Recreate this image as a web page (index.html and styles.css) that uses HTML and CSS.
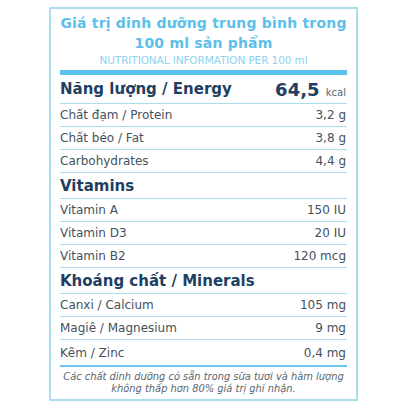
FILE: index.html
```html
<!DOCTYPE html>
<html lang="vi">
<head>
<meta charset="utf-8">
<link rel="stylesheet" href="styles.css">
</head>
<body>
<div class="card">
  <div class="title">Giá trị dinh dưỡng trung bình trong<br>100 ml sản phẩm</div>
  <div class="subtitle">NUTRITIONAL INFORMATION PER 100 ml</div>
  <div class="bar"></div>
  <div class="row energy"><span class="head">Năng lượng / Energy</span><span class="big">64,5 <small>kcal</small></span></div>
  <div class="row"><span>Chất đạm / Protein</span><span>3,2 g</span></div>
  <div class="row"><span>Chất béo / Fat</span><span>3,8 g</span></div>
  <div class="row"><span>Carbohydrates</span><span>4,4 g</span></div>
  <div class="row section"><span class="head">Vitamins</span></div>
  <div class="row"><span>Vitamin A</span><span>150 IU</span></div>
  <div class="row"><span>Vitamin D3</span><span>20 IU</span></div>
  <div class="row"><span>Vitamin B2</span><span>120 mcg</span></div>
  <div class="row section"><span class="head">Khoáng chất / Minerals</span></div>
  <div class="row"><span>Canxi / Calcium</span><span>105 mg</span></div>
  <div class="row"><span>Magiê / Magnesium</span><span>9 mg</span></div>
  <div class="row last"><span>Kẽm / Zinc</span><span>0,4 mg</span></div>
  <div class="note">Các chất dinh dưỡng có sẵn trong sữa tươi và hàm lượng<br>không thấp hơn 80% giá trị ghi nhận.</div>
</div>
</body>
</html>
```
FILE: styles.css
```css
html, body {
  margin: 0;
  padding: 0;
  background: #ffffff;
}
body {
  font-family: "DejaVu Sans", "Noto Sans", sans-serif;
  color: #46515b;
}
.card {
  width: 287px;
  margin: 7px auto 0;
  padding: 4px 9px 0;
  border: 2px solid #a9dcef;
  height: 386px;
  box-sizing: content-box;
}
.title {
  text-align: center;
  color: #5cbfea;
  font-weight: bold;
  font-size: 14px;
  letter-spacing: 0.2px;
  line-height: 20px;
  white-space: nowrap;
}
.subtitle {
  text-align: center;
  color: #8ed2ef;
  font-size: 10.5px;
  line-height: 14px;
  letter-spacing: -0.1px;
  white-space: nowrap;
}
.bar {
  height: 5px;
  background: #5cc4ea;
  margin-top: 3px;
}
.row {
  display: flex;
  justify-content: space-between;
  align-items: center;
  height: 23px;
  border-bottom: 1px solid #aadcef;
  box-sizing: border-box;
  font-size: 12px;
  padding-right: 1px;
}
.head {
  color: #1f3f62;
  font-weight: bold;
  font-size: 15px;
}
.energy {
  height: 29px;
}
.big {
  color: #1f3f62;
  font-weight: bold;
  font-size: 18px;
}
.big small {
  font-weight: normal;
  font-size: 10px;
  color: #5a6670;
}
.section {
  height: 26px;
}
.row.last {
  height: 27px;
  border-bottom: 2px solid #6cc6ec;
}
.note {
  text-align: center;
  font-style: italic;
  font-size: 9.9px;
  line-height: 12px;
  color: #5a6670;
  padding-top: 4px;
  white-space: nowrap;
}
```
